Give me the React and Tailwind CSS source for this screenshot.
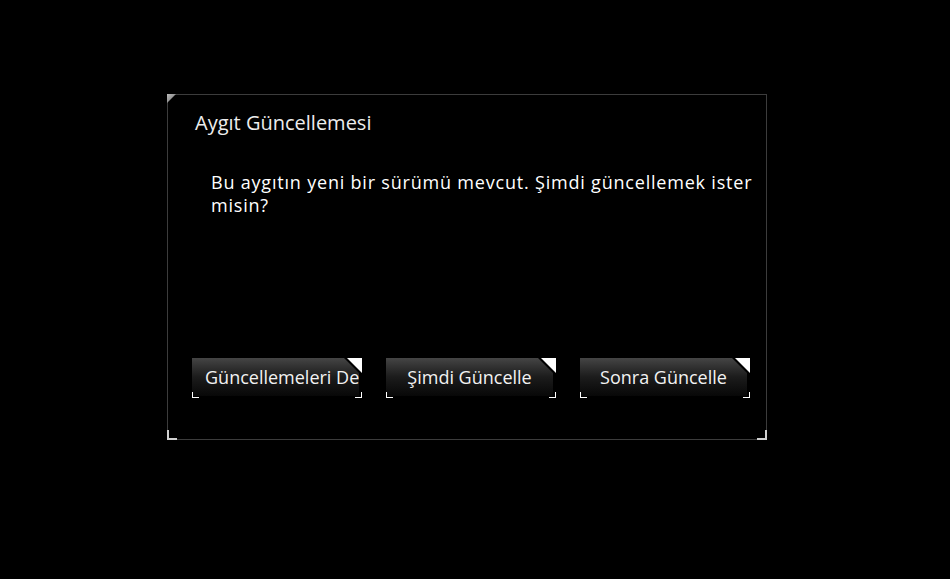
import React from "react";

const Btn = ({ label }) => {
  return (
    <div className="relative w-[170px] h-[40px]">
      {/* body with the clipped corner */}
      <div
        className="absolute left-0 top-0 w-[167px] h-[38px] bg-gradient-to-b from-[#454545] via-[#1c1c1c] to-[#080808] [clip-path:polygon(0_0,152px_0,167px_15px,167px_100%,0_100%)]"
      >
        <div className="w-full h-full px-[13px] text-center whitespace-nowrap overflow-hidden text-[18px] leading-[38px] text-[#f2f2f2]">
          {label}
        </div>
      </div>
      {/* white corner tag */}
      <div className="absolute right-0 top-0 w-[15px] h-[15px] bg-white [clip-path:polygon(0_0,100%_0,100%_100%)]" />
      {/* bottom brackets */}
      <div className="absolute left-0 bottom-0 w-[7px] h-[6px] border-l border-b border-white" />
      <div className="absolute right-0 bottom-0 w-[7px] h-[6px] border-r border-b border-white" />
    </div>
  );
};

export default function App() {
  const buttons = ["Güncellemeleri Devre Dışı Bırak", "Şimdi Güncelle", "Sonra Güncelle"];
  return (
    <div
      className="w-[950px] h-[579px] bg-black overflow-hidden pt-[94px] pl-[167px]"
      style={{ fontFamily: '"Open Sans", "Noto Sans", sans-serif' }}
    >
      <div className="relative w-[600px] h-[346px] border border-[#3c3c3c] flex flex-col">
        <div className="absolute -left-px -top-px w-[9px] h-[9px] bg-gradient-to-br from-[#bdbdbd] to-[#6a6a6a] [clip-path:polygon(0_0,100%_0,0_100%)]" />
        <div className="absolute -left-px -bottom-px w-[10px] h-[10px] border-l-2 border-b-2 border-[#d0d0d0]" />
        <div className="absolute -right-px -bottom-px w-[10px] h-[10px] border-r-2 border-b-2 border-[#d0d0d0]" />

        <div className="pl-[27px] pt-[14px] text-[20px] leading-[27px] text-[#ededed]">
          Aygıt Güncellemesi
        </div>
        <div className="pl-[43px] pt-[35px] w-[596px] text-[18px] leading-[23px] text-white tracking-[0.8px]">
          Bu aygıtın yeni bir sürümü mevcut. Şimdi güncellemek ister misin?
        </div>

        <div className="mt-auto mb-[41px] pl-[24px] flex gap-[24px]">
          {buttons.map((b, i) => (
            <Btn key={i} label={b} />
          ))}
        </div>
      </div>
    </div>
  );
}
